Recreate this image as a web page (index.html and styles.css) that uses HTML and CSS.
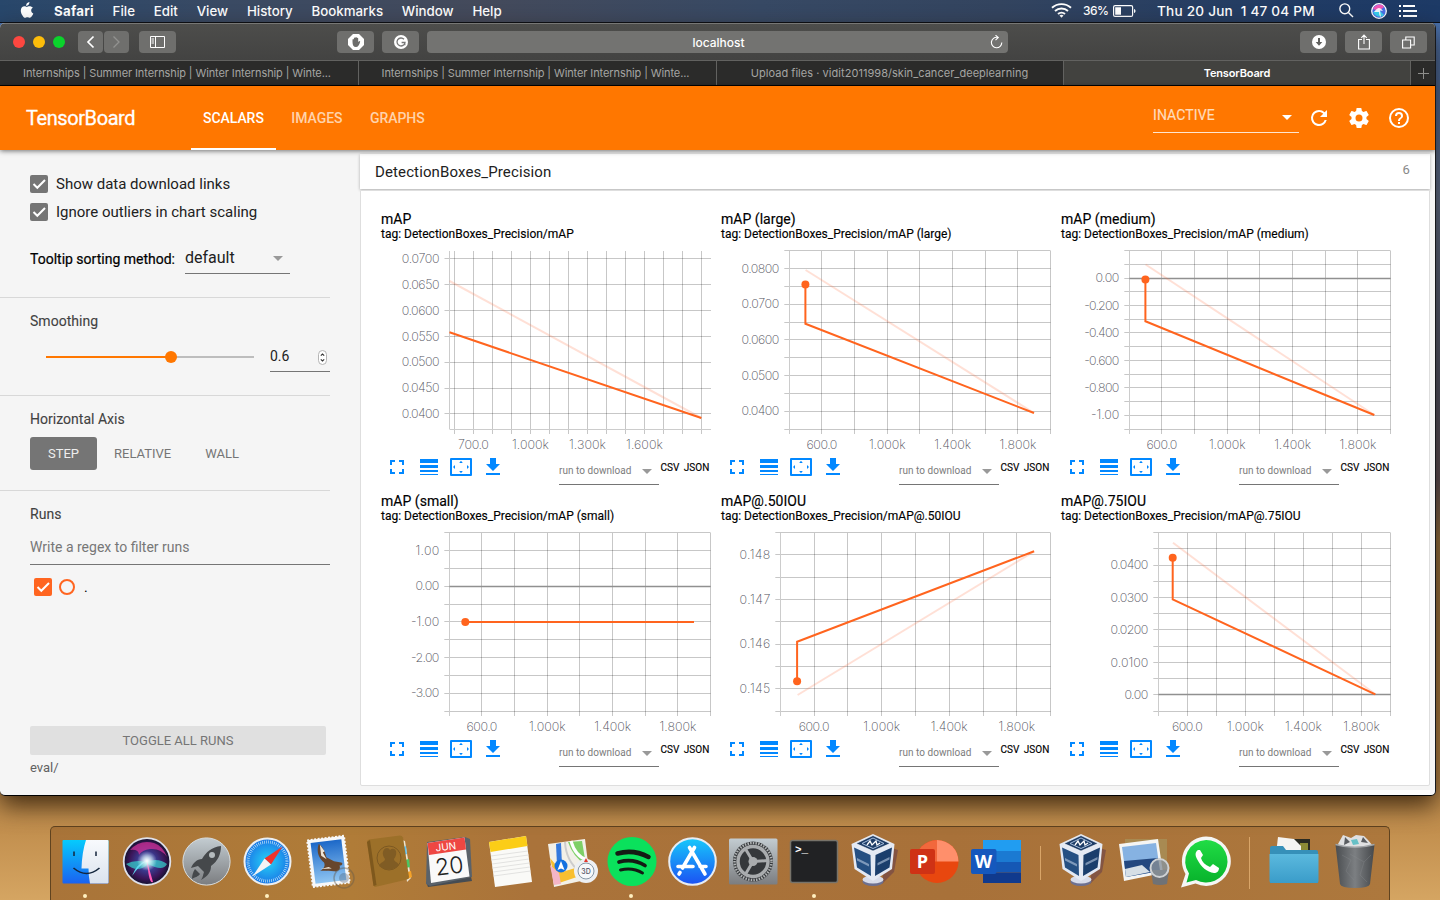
FILE: index.html
```html
<!DOCTYPE html>
<html lang="en">
<head>
<meta charset="utf-8">
<title>TensorBoard</title>
<link rel="stylesheet" href="styles.css">
</head>
<body>
<svg class="defs" width="0" height="0">
  <defs>
    <linearGradient id="gFinder" x1="0" y1="0" x2="0" y2="1"><stop offset="0" stop-color="#05cbfd"/><stop offset="1" stop-color="#1b62f0"/></linearGradient>
    <linearGradient id="gFace" x1="0" y1="0" x2="0" y2="1"><stop offset="0" stop-color="#f8fafd"/><stop offset="1" stop-color="#dbe3ee"/></linearGradient>
    <linearGradient id="gSteel" x1="0" y1="0" x2="0" y2="1"><stop offset="0" stop-color="#c3ccd1"/><stop offset="1" stop-color="#7b7d80"/></linearGradient>
    <radialGradient id="gSiri"><stop offset="0" stop-color="#6fc4ea"/><stop offset=".35" stop-color="#3b3f96"/><stop offset=".75" stop-color="#3a1558"/><stop offset="1" stop-color="#12122c"/></radialGradient>
    <radialGradient id="gGlow"><stop offset="0" stop-color="#fff"/><stop offset=".3" stop-color="#fff" stop-opacity=".7"/><stop offset="1" stop-color="#fff" stop-opacity="0"/></radialGradient>
    <radialGradient id="gSafari"><stop offset="0" stop-color="#25d3f7"/><stop offset="1" stop-color="#1b76e6"/></radialGradient>
    <linearGradient id="gStore" x1="0" y1="0" x2="0" y2="1"><stop offset="0" stop-color="#17c9fb"/><stop offset="1" stop-color="#1b50f3"/></linearGradient>
    <linearGradient id="gSky" x1="0" y1="0" x2="0" y2="1"><stop offset="0" stop-color="#1c68c8"/><stop offset="1" stop-color="#8fc5f2"/></linearGradient>
    <linearGradient id="gFolder" x1="0" y1="0" x2="0" y2="1"><stop offset="0" stop-color="#5bb9de"/><stop offset="1" stop-color="#3a9cc9"/></linearGradient>
    <linearGradient id="gBin" x1="0" y1="0" x2="1" y2="0"><stop offset="0" stop-color="#4a4d50"/><stop offset=".5" stop-color="#7c7f82"/><stop offset="1" stop-color="#45484b"/></linearGradient>
    <linearGradient id="gWa" x1="0" y1="0" x2="0" y2="1"><stop offset="0" stop-color="#20dc45"/><stop offset="1" stop-color="#08b32c"/></linearGradient>
    <symbol id="check" viewBox="0 0 18 18"><path d="M3.500 9 7.300 12.800 15 5" fill="none" stroke="#fff" stroke-width="2"/></symbol>
    <symbol id="vbox" viewBox="0 0 60 70">
      <path d="M42 16 54 20 50 42 38 54Z" fill="#4b2850" opacity=".4"/>
      <ellipse cx="29" cy="51.500" rx="10.500" ry="4.500" fill="#6d7090"/><ellipse cx="29" cy="49.500" rx="10.500" ry="4" fill="#d8dcea"/>
      <path d="M29 4 50.500 14 48 39 29 51 10.500 39 7.500 14Z" fill="#e4e9f3"/>
      <path d="M29 5.500 46 13.500 29 21 12 13.500Z" fill="#1d3c66" stroke="#fff" stroke-width=".6"/>
      <path d="M10 17.500 26.500 25 27 46 13 37.500Z" fill="#254f82"/>
      <path d="M48 17.500 31.500 25 31 46 45.500 37.500Z" fill="#1b3e6c"/>
      <path d="M29 8 40 13.500 29 18.500 18 13.500Z" fill="none" stroke="#a8bfdd" stroke-width="1"/>
      <path d="m23 15 3-4 2 4 4-4 1 4 3-2" fill="none" stroke="#fff" stroke-width="1.300"/>
      <path d="m13 28 12 6v2.500l-12-6zM45.500 27l-12 6v2.500l12-6z" fill="#b9c9df" opacity=".6"/>
    </symbol>
  </defs>
</svg>

<header class="menubar">
  <svg class="apple" width="14" height="17" viewBox="0 0 14 17"><path fill="#fff" d="M9.400 0c.1 1.100-.3 2.100-.9 2.800-.6.700-1.500 1.200-2.400 1.200-.1-1 .4-2.100.9-2.700C7.600.6 8.600.1 9.400 0ZM12.800 5.700c-1 .6-1.600 1.500-1.600 2.700 0 1.400.8 2.500 2.100 3-.3 1-.8 1.900-1.400 2.700-.6.9-1.200 1.700-2.200 1.700-.9 0-1.200-.6-2.300-.6s-1.500.6-2.300.6c-1 0-1.700-.9-2.300-1.800C1.600 12.400.8 10.400.8 8.700c0-2.900 1.800-4.400 3.600-4.400 1 0 1.800.6 2.400.6.600 0 1.500-.7 2.700-.7 1.300 0 2.500.5 3.300 1.500Z"/></svg>
  <nav class="menus"><b>Safari</b><span>File</span><span>Edit</span><span>View</span><span>History</span><span>Bookmarks</span><span>Window</span><span>Help</span></nav>
  <div class="status">
    <svg width="21" height="15" viewBox="0 0 21 15" fill="none" stroke="#fff" stroke-width="1.900"><path d="M1 4.800a14 14 0 0 1 19 0M4 8a9.500 9.500 0 0 1 13 0M7 11a5.200 5.200 0 0 1 7 0"/><path d="m10.500 14.800-2-2.200q2-1.500 4 0z" fill="#fff" stroke="none"/></svg>
    <span class="pct">36%</span>
    <svg class="battery" width="24" height="12" viewBox="0 0 24 12"><rect x=".6" y=".6" width="19" height="10.800" rx="1.500" fill="none" stroke="#fff" stroke-width="1.200"/><path d="M2.200 2.200h5.800v7.600H2.200zM21 4c2 .6 2 3.400 0 4z" fill="#fff"/></svg>
    <span class="clock">Thu 20 Jun&nbsp; 1 47 04 PM</span>
    <svg class="lens" width="15" height="15" viewBox="0 0 15 15" fill="none" stroke="#fff" stroke-width="1.400"><circle cx="5.800" cy="5.800" r="4.900"/><path d="m9.400 9.400 4.600 4.600"/></svg>
    <svg class="siri" width="16" height="16" viewBox="0 0 16 16"><circle cx="8" cy="8" r="7.300" fill="#4a6fe8" stroke="#fff" stroke-width="1.300"/><path d="M2 6C4 1 11 0 13 4L8 8z" fill="#f058b8"/><path d="m2 9 6-2 5 5c-3 3-9 2-11-3z" fill="#37cfee"/><path d="M3 9q3-4 5-4t4 3l-3-.5L10 14q-2-1-2-5-2 0-5 0z" fill="#fff" opacity=".9"/></svg>
    <svg width="19" height="12" viewBox="0 0 19 12" fill="#fff"><path d="M0 0h2v2H0zM0 5h2v2H0zM0 10h2v2H0zM4 0h12v2H4zM4 5h14v2H4zM4 10h14v2H4z"/></svg>
  </div>
</header>

<section class="window">
  <div class="toolbar">
    <div class="lights"><i class="red"></i><i class="yellow"></i><i class="green"></i></div>
    <div class="navpair">
      <span class="tbtn small"><svg width="9" height="14" viewBox="0 0 9 14"><path d="M7.500 1.500 2 7l5.500 5.500" fill="none" stroke="#fff" stroke-width="1.700"/></svg></span>
      <span class="tbtn small"><svg width="9" height="14" viewBox="0 0 9 14"><path d="M1.500 1.500 7 7l-5.500 5.500" fill="none" stroke="#929290" stroke-width="1.300"/></svg></span>
    </div>
    <span class="tbtn side"><svg width="15" height="12" viewBox="0 0 15 12" fill="none" stroke="#fff"><path d="M.5.500h14v11H.5zM5.500.500v11M1.500 3h2.500M1.500 5h2.500M1.500 7h2.500"/></svg></span>
    <span class="tbtn adb"><svg width="16" height="16" viewBox="0 0 16 16"><path d="M5 0h6l5 5v6l-5 5H5l-5-5V5z" fill="#fff"/><path d="M4.500 8V5.500q.8-.8 1.400 0V4q.8-.9 1.400 0v-.6q.8-.8 1.500 0V4q.8-.6 1.400.2V8q1.600-1.600 2-.6c-.7 3.500-2.200 5.600-4.200 5.600C5.500 13 4.500 11 4.500 8Z" fill="#6d6d6b"/></svg></span>
    <span class="tbtn"><svg width="14" height="14" viewBox="0 0 14 14"><circle cx="7" cy="7" r="7" fill="#fff"/><path d="M10 4.300A4 4 0 1 0 11 7.500H7.600M10.800 7.500v2.800" fill="none" stroke="#777" stroke-width="1.300"/></svg></span>
    <div class="address"><span>localhost</span><svg width="13" height="14" viewBox="0 0 13 14"><path d="M7.500 2.400A5.200 5.200 0 1 0 11.800 7.500M5.500.2 8.300 2.500 5.500 5.100" fill="none" stroke="#fff" stroke-width="1.100"/></svg></div>
    <div class="right">
      <span class="tbtn"><svg width="14" height="14" viewBox="0 0 14 14"><circle cx="7" cy="7" r="7" fill="#fff"/><path d="M6 3h2v4h2.300L7 10.700 3.700 7H6z" fill="#60605e"/></svg></span>
      <span class="tbtn"><svg width="12" height="16" viewBox="0 0 12 16" fill="none" stroke="#fff" stroke-width="1.100"><path d="M4 5.500H.6v9.500h10.800V5.500H8M6 10V1.200M3.300 3.800 6 1.100l2.700 2.700"/></svg></span>
      <span class="tbtn"><svg width="13" height="13" viewBox="0 0 13 13" fill="none" stroke="#fff" stroke-width="1.100"><path d="M.6 4h8v8h-8zM3.800 4V1h8.400v8H8.600"/></svg></span>
    </div>
  </div>
  <div class="tabs">
    <div class="tab tight"><span>Internships | Summer Internship | Winter Internship | Winte...</span></div>
    <div class="tab tight"><span>Internships | Summer Internship | Winter Internship | Winte...</span></div>
    <div class="tab"><span>Upload files · vidit2011998/skin_cancer_deeplearning</span></div>
    <div class="tab active"><span>TensorBoard</span></div>
    <div class="plus"><svg width="11" height="11" viewBox="0 0 11 11"><path d="M5.500 0v11M0 5.500h11" stroke="#8d8d8b"/></svg></div>
  </div>

  <div class="appbar">
    <h1>TensorBoard</h1>
    <nav><a class="on">SCALARS</a><a>IMAGES</a><a>GRAPHS</a></nav>
    <div class="reload"><span>INACTIVE</span><i></i></div>
    <svg class="ic" viewBox="0 0 24 24"><path d="M17.650 6.350A7.960 7.960 0 0 0 12 4a8 8 0 1 0 7.730 10h-2.080A6 6 0 1 1 12 6c1.660 0 3.140.69 4.220 1.780L13 11h7V4z"/></svg>
    <svg class="ic" viewBox="0 0 24 24"><path d="M19.430 12.980c.04-.32.07-.64.07-.98s-.03-.66-.07-.98l2.110-1.650c.19-.15.24-.42.12-.64l-2-3.460c-.12-.22-.39-.3-.61-.22l-2.490 1c-.52-.4-1.080-.73-1.690-.98l-.38-2.650A.488.488 0 0 0 14 2h-4c-.25 0-.46.18-.49.42l-.38 2.650c-.61.25-1.170.59-1.690.98l-2.490-1c-.23-.09-.49 0-.61.22l-2 3.460c-.13.22-.07.49.12.64l2.110 1.650c-.04.32-.07.65-.07.98s.03.66.07.98l-2.110 1.650c-.19.15-.24.42-.12.64l2 3.460c.12.22.39.3.61.22l2.490-1c.52.4 1.080.73 1.690.98l.38 2.650c.03.24.24.42.49.42h4c.25 0 .46-.18.49-.42l.38-2.650c.61-.25 1.170-.59 1.690-.98l2.490 1c.23.09.49 0 .61-.22l2-3.460c.12-.22.07-.49-.12-.64zM12 15.500a3.500 3.500 0 1 1 0-7 3.500 3.500 0 0 1 0 7z"/></svg>
    <svg class="ic" viewBox="0 0 24 24"><path d="M11 18h2v-2h-2v2zm1-16a10 10 0 1 0 0 20 10 10 0 0 0 0-20zm0 18a8 8 0 1 1 0-16 8 8 0 0 1 0 16zm0-14a4 4 0 0 0-4 4h2a2 2 0 1 1 4 0c0 2-3 1.750-3 5h2c0-2.250 3-2.500 3-5a4 4 0 0 0-4-4z"/></svg>
  </div>

  <div class="content">
    <aside>
      <div class="sec s1">
        <label class="cb"><i><svg><use href="#check"/></svg></i>Show data download links</label>
        <label class="cb"><i><svg><use href="#check"/></svg></i>Ignore outliers in chart scaling</label>
        <div class="sorting"><span>Tooltip sorting method:</span><div class="dd">default<i></i></div></div>
      </div>
      <div class="sec s2">
        <h3>Smoothing</h3>
        <div class="smooth"><div class="slider"><b></b><i></i><s></s></div><div class="num">0.6<svg width="9" height="15" viewBox="0 0 9 15"><rect x=".5" y=".5" width="8" height="14" rx="4" fill="#fff" stroke="#b5b5b5"/><path d="M2.800 5.700 4.500 4l1.700 1.700M2.800 9.300 4.500 11l1.700-1.700" fill="none" stroke="#333" stroke-width="1.100"/></svg></div></div>
      </div>
      <div class="sec s3">
        <h3>Horizontal Axis</h3>
        <div class="axis"><span class="on">STEP</span><span>RELATIVE</span><span>WALL</span></div>
      </div>
      <div class="s4">
        <h3>Runs</h3>
        <div class="regex">Write a regex to filter runs</div>
        <div class="run"><i class="box"><svg><use href="#check"/></svg></i><i class="ring"></i><span>.</span></div>
        <div class="toggle">TOGGLE ALL RUNS</div>
        <div class="eval">eval/</div>
      </div>
    </aside>
    <main>
      <div class="group"><span>DetectionBoxes_Precision</span><em>6</em></div>
      <div class="pane" id="pane"></div>
      <div class="next"></div>
    </main>
  </div>
</section>

<footer class="dock">
  <div class="app run"><svg viewBox="0 0 60 70"><rect x="7.500" y="10" width="46" height="43.500" rx="1" fill="url(#gFinder)"/><path d="M31 10h21.500q1 0 1 1v41.500q0 1-1 1H35q-1.500-7-1.500-15H26.500Q27 22 31 10Z" fill="url(#gFace)"/><path d="M19 21.500v4.500M41 21.500v4.500" stroke="#14263d" stroke-width="1.500"/><path d="M18.500 38q13 11 26 0" fill="none" stroke="#14263d" stroke-width="1.600"/></svg></div>
  <div class="app"><svg viewBox="0 0 60 70"><circle cx="31" cy="31.500" r="23.300" fill="url(#gSiri)" stroke="#dfe1ea" stroke-width="1.800"/><path d="M14 20q10-11 24-7 9 3 13 14-6-9-17-8-8 1-11 6 0-6-9-5Z" fill="#d8339c" opacity=".7"/><path d="M10 34q9-5 20-2 12-5 21 2-4 8-19 0-10 10-22 0Z" fill="#35d6cf" opacity=".7"/><path d="m31 31 6 21q-4 3-6-21Z" fill="#ff59b8"/><path d="M30 31q-9 2-14 15 7-10 14-15Z" fill="#5fd6ef"/><circle cx="31" cy="31" r="10" fill="url(#gGlow)"/></svg></div>
  <div class="app"><svg viewBox="0 0 60 70"><circle cx="30.500" cy="31.500" r="23.600" fill="url(#gSteel)" stroke="#d9dfe2"/><path d="M45 16c-9 1-15 6-19 13-5 0-9 4-11 9l7-2 4 4 2 2c-1 3-1 5-3 8 7-4 10-8 10-14 7-5 10-12 10-20ZM19 39l5 5c-2 3-5 3-8 5 0-4 1-7 3-10Z" fill="#45484b"/><circle cx="36" cy="25" r="3" fill="#b4babd"/></svg></div>
  <div class="app run"><svg viewBox="0 0 60 70"><circle cx="30.500" cy="31.500" r="23" fill="url(#gSafari)" stroke="#eceff2" stroke-width="2"/><circle cx="30.500" cy="31.500" r="19.500" fill="none" stroke="#d8f0fb" stroke-width="3" stroke-dasharray=".6 1.400"/><path d="M45.500 16.500 34 34.500 27.500 28.500Z" fill="#f0332c"/><path d="M15.500 46.500 27.500 28.500 34 34.500Z" fill="#f3f4f5"/></svg></div>
  <div class="app"><svg viewBox="0 0 60 70"><g transform="rotate(-7 30 32)"><rect x="12" y="8" width="37" height="47" fill="#f7f8f9" stroke="#f7f8f9" stroke-width="2" stroke-dasharray="2 1.500"/><rect x="15" y="11" width="31" height="41" fill="url(#gSky)"/><path d="M23 13c4 3 5 8 6 14l7 5 7 2c2 1 1 3-2 3 1 4-2 6-6 5-6-1-10-2-14-2 4-2 6-4 5-8-4-4-7-11-3-19Z" fill="#67462d"/><path d="m24 14 4 7-2 1 3 7-5-4zM22 38l8-1 3 2z" fill="#eee6d8"/></g><circle cx="46" cy="48" r="10" fill="none" stroke="#655b4c" stroke-width="1.500" opacity=".45"/><circle cx="46" cy="48" r="5" fill="#4a5c72" opacity=".35"/></svg></div>
  <div class="app"><svg viewBox="0 0 60 70"><path d="m43 10 3 1 6 37-4 4z" fill="#eee6d3"/><path d="m44 17 3-1 1 8-3 1z" fill="#66c3ef"/><path d="m46 30 4-1 1 8-4 1z" fill="#4cc663"/><path d="m48 42 4-1 1 6-4 2z" fill="#f6a328"/><path d="M8 12q0-2 2-2.500l31-4q2 0 3 2L50 47q0 2-2 2.500L16 57q-1 0-1.500-2Z" fill="#9c7029"/><path d="M8 12 14.500 56l3-1L11 10Z" fill="#7e581d"/><circle cx="30" cy="28" r="12" fill="none" stroke="#7d5922"/><path d="M20 36c1-4 6-4 6-7-4-5-2-11 2-11q2 0 3 2 2-2 4-1c3 1 3 6 0 10 0 3 4 3 5 6-5 6-14 6-20 1Z" fill="#805c24"/></svg></div>
  <div class="app"><svg viewBox="0 0 60 70"><path d="m7 52 2 5 44-6-1-4z" fill="#454c53"/><path d="M8 12 46 7l5 2 2 38-42 9-4-2Z" fill="#5a626a"/><path d="m8.500 13 37-5.500 5 39L12 53Z" fill="#f9f9f9"/><path d="m8.500 13 37-5.500 1.500 12L10 25Z" fill="#ee4742"/><g transform="rotate(-7 30 30)" text-anchor="middle"><text class="cal-m" x="28.500" y="20">JUN</text><text class="cal-d" x="29.500" y="44">20</text></g></svg></div>
  <div class="app"><svg viewBox="0 0 60 70"><path d="m9 12 37-6 6 46-37 5Z" fill="#fafaf7"/><path d="m9 12 37-6 1.500 10-37 6Z" fill="#fbcd17"/><path d="m11 26 37-5m-36.500 9 37-5m-36.500 9 37-5m-36.500 9 37-5m-36.500 9 37-5m-36.500 9 37-5" stroke="#e2e2e0"/></svg></div>
  <div class="app"><svg viewBox="0 0 60 70"><path d="m7 14 37-5 5 40-36 8Z" fill="#f2f0e8"/><path d="m9 28 12 14 20-6 1 9-27 9Z" fill="#f8bf30"/><path d="m27 12 14-1 4 24q-13-8-18-23Z" fill="#7ed067"/><path d="M30 11q4 15 16 19" fill="none" stroke="#fff" stroke-width="3"/><path d="m9 35 9 8 2 11-7 1Z" fill="#f5b5c6"/><path d="m15 14 5-1 1 22h-5Z" fill="#3479dd"/><path d="M24 12q1 19 15 30" fill="none" stroke="#ccc" stroke-width="2"/><circle cx="20" cy="36" r="6.500" fill="#1471e0"/><path d="m20 31 3.500 9-3.500-1.500-3.500 1.500z" fill="#fff"/><circle cx="45" cy="41" r="12" fill="#edf0f3"/><circle cx="45" cy="41" r="8" fill="#f6f8fa" stroke="#8797a6"/><path d="m45 28 2 4h-4z" fill="#e2382e"/><text class="threed" x="45" y="44" text-anchor="middle">3D</text></svg></div>
  <div class="app run"><svg viewBox="0 0 60 70"><circle cx="31" cy="31.500" r="24.500" fill="#0ae15c"/><g fill="none" stroke="#141b14" stroke-linecap="round"><path d="M16.500 23.500q16-4.500 31 3.500" stroke-width="4.500"/><path d="M18 32q14-4 26 3.500" stroke-width="3.700"/><path d="M19.500 40q12-3 22 3" stroke-width="3"/></g></svg></div>
  <div class="app"><svg viewBox="0 0 60 70"><circle cx="30.500" cy="31.500" r="23.300" fill="url(#gStore)" stroke="#e7ecf3" stroke-width="2"/><g stroke="#fff" stroke-width="3.600" stroke-linecap="round"><path d="m32.500 17.500-12 20.500M27.500 17.500 43 44M16 36.500h15M38 36.500h6M18 42.500l-1 1.500"/></g></svg></div>
  <div class="app"><svg viewBox="0 0 60 70"><rect x="6" y="8.500" width="48.500" height="46" rx="1.500" fill="url(#gSteel)"/><circle cx="30" cy="31.500" r="20" fill="#35383b"/><circle cx="30" cy="31.500" r="18.500" fill="none" stroke="#b1b4b5" stroke-width="2.500" stroke-dasharray="1.500 1.200"/><circle cx="30" cy="31.500" r="15" fill="none" stroke="#a9acae" stroke-width="3.500"/><circle cx="30" cy="31.500" r="4.500" fill="#a9acae"/><path d="m30 31.500 15-1M30 31.500 22.500 19M30 31.500 22 45" stroke="#a9acae" stroke-width="3"/></svg></div>
  <div class="app run"><svg viewBox="0 0 60 70"><rect x="6.500" y="10.500" width="47" height="42" rx="2" fill="#212224" stroke="#77736a" stroke-width="1.500"/><text class="term" x="11" y="23">&gt;_</text></svg></div>
  <div class="app"><svg viewBox="0 0 60 70"><use href="#vbox"/></svg></div>
  <div class="app"><svg viewBox="0 0 60 70"><circle cx="32" cy="31.500" r="21.500" fill="#e8470f"/><path d="M32 10a21.500 21.500 0 0 1 21.500 21.500H32Z" fill="#ff8f6b"/><path d="M32 10v21.500H10.500A21.500 21.500 0 0 1 32 10Z" fill="#f2683c"/><rect x="5" y="19" width="25" height="25" rx="2" fill="#cf3215"/><text class="office" x="17.500" y="38" text-anchor="middle">P</text></svg></div>
  <div class="app"><svg viewBox="0 0 60 70"><path d="M17 10h38v11H17z" fill="#219df1"/><path d="M17 21h38v11H17z" fill="#1b7ad2"/><path d="M17 32h38v10.500H17z" fill="#1558b5"/><path d="M17 42.500h38V53H17z" fill="#103a8d"/><rect x="5" y="19" width="25.500" height="25" rx="2" fill="#1558bd"/><text class="office" x="17.500" y="38" text-anchor="middle">W</text></svg></div>
  <div class="sep short"></div>
  <div class="app wide"><svg viewBox="0 0 60 70"><use href="#vbox" x="1"/></svg></div>
  <div class="app wide"><svg viewBox="0 0 60 70"><path d="M12 9h42v30H12z" fill="#a88a52"/><path d="m6 14 39-5 5 34-39 8Z" fill="#f5f5f3"/><path d="m9 17 34-4 4 28-34 6Z" fill="#86b2e2"/><path d="m11 31 34-3 2 13-34 6Z" fill="#24487f"/><path d="m12 39 17-4 8 7-24 5Z" fill="#d6dfe6"/><path d="M38 40h18l-2 14q-7 2-14 0Z" fill="#6f7276"/><circle cx="46.500" cy="38" r="9" fill="#88919a" fill-opacity=".8" stroke="#cfd2d4" stroke-width="2"/></svg></div>
  <div class="app wide"><svg viewBox="0 0 60 70"><path d="M30 6.500A24.700 24.700 0 1 1 19.500 53.500L5 57.500 9.500 44A24.700 24.700 0 0 1 30 6.500Z" fill="#f5f6f5"/><path d="M30 10A21.300 21.300 0 1 1 20 50L10.500 52.500 13 43.500A21.300 21.300 0 0 1 30 10Z" fill="url(#gWa)"/><path d="M22 20c-3 2-3 5-1 9 4 8 10 13 17 14 3 0 5-2 5-5l-6-4-3 3c-5-2-8-5-9-9l2-3-3-5Z" fill="#fff"/></svg></div>
  <div class="sep"></div>
  <div class="app"><svg viewBox="0 0 60 70"><path d="M15 9h30v15H15z" fill="#2a2b22"/><path d="M35 13h8v8h-8z" fill="#8c8b35"/><path d="m13 7 16 2 7 7v8H11Z" fill="#f4f4f2"/><path d="M5 18q0-2 2-2h11l3 4h30q2 0 2 2v31H5Z" fill="#3690b9"/><path d="M4.500 24h49V51q0 2-2 2h-45q-2 0-2-2Z" fill="url(#gFolder)"/></svg></div>
  <div class="app"><svg viewBox="0 0 60 70"><path d="m12 14 5-9 8 3 5-3 8 1 4 4 5 6-5 4H15Z" fill="#dfe0e1"/><path d="m19 7 5 5-6 3zM37 7l5 6-7-1z" fill="#595c60"/><path d="m25 10 6-1 2 5-6 1z" fill="#66c0c6"/><path d="M9.500 14.500q19.500 5.500 39 0L44 54q-1 4-15 4t-15-4Z" fill="url(#gBin)"/><path d="M9.500 14.500q19.500 5.500 39 0" fill="none" stroke="#a1a4a7" stroke-width="1.500"/><path d="m16 25 9 5-5 11 8 9m-4-26 14 8 7-7M38 32l-4 13 7 7" fill="none" stroke="#8b8e91" opacity=".3"/></svg></div>
</footer>
<script src="charts.js"></script>
</body>
</html>
```
FILE: styles.css
```css
* { box-sizing: border-box; }
body {
  margin: 0; width: 1440px; height: 900px; overflow: hidden;
  display: flex; flex-direction: column;
  font-family: Roboto, "Liberation Sans", sans-serif; color: #000;
  background:
    linear-gradient(180deg, #4874b5 0, #47699c 90px, #5b6e8e 200px, #4c5268 390px, #5a4e57 480px, #94703f 540px, #a87c43 700px, #c28f4e 830px, #d5a562 900px);
}
.defs { position: absolute; }
i, em { font-style: normal; }
h1, h3 { margin: 0; font-weight: 400; }

/* menu bar */
.menubar {
  flex: none; height: 23px; display: flex; align-items: center; padding: 0 22px 1px 20px;
  background: linear-gradient(90deg, #28476b 0, #3a4a63 230px, #444a5b 480px, #374964 760px, #33445f 1000px, #203b64 1300px, #1d3a66 100%);
  border-bottom: 1px solid #0b0f16; color: #fff;
  font-family: Inter, sans-serif; font-size: 13.3px; font-weight: 500;
}
.apple { margin-top: -1px; }
.menus { display: flex; gap: 18.8px; margin-left: 20px; }
.menus b { font-weight: 700; letter-spacing: .25px; }
.status { margin-left: auto; display: flex; align-items: center; }
.pct { font-size: 12px; margin-left: 11px; width: 30px; letter-spacing: -.5px; }
.clock { margin-left: 20px; width: 160px; white-space: nowrap; font-size: 13.6px; letter-spacing: .22px; }
.lens { margin-left: 22px; }
.siri { margin: 0 12px 0 17px; }

/* browser window */
.window {
  flex: none; width: 1436px; height: 773px; overflow: hidden; display: flex; flex-direction: column;
  border-right: 1px solid #16181c; border-bottom: 1px solid #000; border-radius: 5px;
  background: #f5f5f5; box-shadow: 0 10px 24px rgba(30, 15, 0, .75);
  position: relative; z-index: 1;
}
.toolbar {
  flex: none; height: 38px; display: flex; align-items: center; padding: 0 8px 0 13px;
  background: linear-gradient(#4d4d4b, #434342); border-top: 1px solid #777775; border-bottom: 1px solid #626260;
}
.lights { display: flex; gap: 8px; }
.lights i { width: 12px; height: 12px; border-radius: 50%; }
.red { background: #fd4740; } .yellow { background: #fdbd0a; } .green { background: #0bd32c; }
.tbtn {
  width: 37px; height: 22px; border-radius: 4px; background: #6f6f6d;
  display: flex; align-items: center; justify-content: center;
}
.tbtn.small { width: 25px; }
.navpair { display: flex; gap: 1px; margin-left: 13px; }
.side { margin-left: 10px; }
.adb { margin: 0 8px 0 161px; }
.address {
  width: 581px; height: 22px; margin-left: 8px; border-radius: 4px; background: #737371; color: #fff;
  display: flex; align-items: center; padding-right: 5px; font: 500 12px Inter, sans-serif;
}
.address span { flex: 1; text-align: center; padding-left: 20px; }
.right { display: flex; gap: 8px; margin-left: auto; }
.tabs {
  flex: none; height: 25px; display: grid; grid-template-columns: 359px 358px 347px 347px 1fr;
  background: #2b2b2a; border-bottom: 1px solid #000; color: #a5a5a3; font: 11px/24px Inter, sans-serif;
}
.tab { border-right: 1px solid #626260; text-align: center; white-space: nowrap; padding-right: 1px; letter-spacing: .04px; }
.tab.tight { padding-right: 4px; letter-spacing: -.1px; }
.tab.active { background: #42423f; color: #fff; font-weight: 600; padding: 0; letter-spacing: -.15px; }
.plus { display: flex; align-items: center; justify-content: center; }

/* app bar */
.appbar {
  flex: none; height: 64px; display: flex; align-items: center; padding: 0 24px 0 26px;
  background: #ff7700; color: #fff; position: relative; z-index: 2; box-shadow: 0 1px 5px rgba(0, 0, 0, .55);
}
.appbar h1 { font-size: 20px; width: 165px; -webkit-text-stroke: .3px #fff; letter-spacing: -.42px; }
.appbar nav { display: flex; gap: 3.500px; align-self: stretch; }
.appbar nav a { padding: 0 12px; line-height: 64px; font-size: 14px; font-weight: 500; letter-spacing: -.05px; color: #ffd3ab; }
.appbar nav a.on { color: #fff; border-bottom: 2px solid #fff; }
.reload {
  margin: 0 8px 0 auto; width: 146px; height: 35px; border-bottom: 1px solid #ffe6d0; color: #ffdcbc;
  font-size: 14px; display: flex; justify-content: space-between; padding: 9px 7px 0 0; margin-top: -6px;
  letter-spacing: .1px; -webkit-text-stroke: .2px #ffdcbc;
}
.reload i, .dd i, .dl i { width: 0; height: 0; border: 5px solid transparent; border-top-color: #fff; border-bottom: 0; margin-top: 8px; }
.ic { width: 24px; height: 24px; fill: #fff; margin-left: 16px; }
.reload + .ic { margin-left: 0; }

/* sidebar */
.content { flex: 1; display: flex; min-height: 0; }
aside { width: 360px; color: #424242; font-size: 14px; }
.sec { width: 330px; border-bottom: 1px solid #d8d8d8; padding-left: 30px; }
.s1 { height: 148px; padding-top: 20px; }
.cb { display: flex; align-items: center; height: 28px; font-size: 15px; color: #212121; }
.cb i, .box { width: 18px; height: 18px; border-radius: 2px; background: #757575; margin-right: 8px; display: flex; }
.cb svg, .box svg { width: 18px; height: 18px; }
.sorting { display: flex; align-items: center; margin-top: 16px; height: 32px; color: #000; font-size: 14px; }
.sorting span { width: 155px; padding-top: 2px; -webkit-text-stroke: .2px #000; white-space: nowrap; }
.dd { width: 105px; height: 32px; border-bottom: 1px solid #757575; font-size: 16px; line-height: 32px; color: #212121; display: flex; justify-content: space-between; padding-right: 7px; }
.dd i { border-top-color: #999; margin-top: 14px; }
.s2 { height: 98px; }
aside h3 { font-size: 14px; line-height: 20px; padding-top: 13px; letter-spacing: .02px; -webkit-text-stroke: .1px #424242; }
.smooth { display: flex; margin-top: 10px; }
.slider { width: 208px; margin: 7px 16px 0; height: 18px; position: relative; display: flex; align-items: center; }
.slider b { width: 125px; height: 2px; background: #ff7700; }
.slider s { flex: 1; height: 2px; background: #bdbdbd; }
.slider i { width: 12px; height: 12px; margin: 0 -6px; border-radius: 50%; background: #ff7700; z-index: 1; }
.num { width: 60px; height: 31px; border-bottom: 1px solid #757575; color: #212121; display: flex; align-items: center; justify-content: space-between; padding-right: 3px; }
.num svg { margin-top: 2px; }
.s3 { height: 95px; }
.axis { display: flex; margin-top: 8px; font-size: 13px; color: #757575; }
.axis span { height: 33px; line-height: 33px; padding: 0 17px; }
.axis .on { background: #757575; color: #eee; border-radius: 3px; width: 67px; text-align: center; }
.s4 { padding-left: 30px; }
.regex { width: 300px; height: 41px; border-bottom: 1px solid #757575; line-height: 46px; color: #777; }
.run .box { background: #ff6520; margin-right: 7px; }
aside .run { display: flex; align-items: center; padding-left: 4px; margin-top: 13px; color: #000; }
.ring { width: 16px; height: 16px; border: 2px solid #ff6520; border-radius: 50%; margin-right: 9px; }
.toggle { width: 296px; height: 29px; line-height: 29px; margin-top: 130px; background: #e0e0e0; border-radius: 2px; text-align: center; color: #757575; font-size: 13px; }
.eval { line-height: 25px; font-size: 13px; color: #616161; }

/* charts */
main { width: 1070px; display: flex; flex-direction: column; }
.group { flex: none; height: 35px; margin-top: 4px; background: #fff; box-shadow: 0 1px 3px rgba(0, 0, 0, .3); display: flex; justify-content: space-between; padding: 0 20px 0 15px; line-height: 36px; font-size: 15px; color: #212121; letter-spacing: .12px; }
.group em { font-size: 13px; line-height: 32px; color: #888; }
.pane { flex: none; height: 596px; margin-top: 1px; background: #fff; border: 1px solid #dedede; border-radius: 0 0 2px 2px; display: grid; grid-template-columns: repeat(3, 340px); grid-auto-rows: 282px; padding: 20px 0 0 20px; }
.next { flex: 1; margin-top: 4px; background: #fdfdfd; }
.card { display: flex; flex-direction: column; }
.card h4 { margin: 0; font-weight: 400; font-size: 14px; line-height: 17px; letter-spacing: .03px; -webkit-text-stroke: .15px #000; }
.card p { margin: 0; font-size: 12px; line-height: 13px; -webkit-text-stroke: .15px #000; }
.plot { display: block; width: 340px; height: 210px; margin-top: 4px; }
.plot text { font: 200 12.500px Inter, sans-serif; fill: #50505a; }
.tools { display: flex; align-items: flex-start; padding-left: 4px; }
.tools > svg { width: 24px; height: 24px; margin-right: 8px; fill: #0288ff; }
.dl { width: 100px; height: 30px; border-bottom: 1px solid #757575; margin-left: 46px; display: flex; justify-content: space-between; padding-right: 7px; font-size: 10px; line-height: 32px; color: #7c7c7c; letter-spacing: .04px; }
.dl i { border-top-color: #999; margin-top: 14px; }
.fmt { font-size: 10px; line-height: 25px; margin-left: 1.500px; word-spacing: 2px; -webkit-text-stroke: .15px #000; white-space: nowrap; }

/* dock */
.dock {
  flex: none; width: 1340px; height: 74px; margin: 30px 0 0 50px; padding: 3px 0 0 4px; display: flex;
  background: linear-gradient(90deg, #a97439, #b07c38 300px, #aa733a 480px, #a87139 900px, #ad783d); border: 1px solid #60431f; border-bottom: 0; border-radius: 5px 5px 0 0;
}
.app { width: 60.730px; height: 70px; position: relative; flex: none; }
.app.wide { width: 62.600px; }
.app svg { display: block; width: 60px; height: 70px; }
.app.run::after { content: ""; position: absolute; left: 28px; top: 64px; width: 4px; height: 4px; border-radius: 50%; background: #fff0c0; }
.sep { width: 27px; height: 52px; margin-top: 7px; background: linear-gradient(#d9a568, #d9a568) 11px 0 / 1px 100% no-repeat; flex: none; }
.sep.short { width: 24px; height: 34px; margin-top: 16px; background-position-x: 13px; }
.cal-m { font: 400 10px Inter, sans-serif; fill: #fff; }
.cal-d { font: 300 23px Inter, sans-serif; fill: #222; }
.threed { font: 500 7px Inter, sans-serif; fill: #556; }
.term { font: 700 11px "Liberation Mono", monospace; fill: #fff; }
.office { font: 700 18px "Open Sans", sans-serif; fill: #fff; }
```
FILE: charts.js
```js
// Plot geometry is in pixels inside a 340x210 drawing; rows run from TOP to BOTTOM.
const TOP = 5.7, BOTTOM = 184;
const wide = ["600.0", "1.000k", "1.400k", "1.800k"];
const charts = [
  { name: "mAP", x0: 68.5, right: 330, cols: Array.from({ length: 14 }, (_, i) => 73.5 + i * 19), labelCols: [1, 4, 7, 10],
    xl: ["700.0", "1.000k", "1.300k", "1.600k"], rows: [13.7, 39.5, 65.4, 91.3, 117.1, 143, 168.9],
    yl: ["0.0700", "0.0650", "0.0600", "0.0550", "0.0500", "0.0450", "0.0400"], first: 0, every: 1, open: true,
    raw: [[68.5, 36], [320.3, 173]], line: [[68.5, 87.3], [320.3, 173]] },
  { name: "mAP (large)", x0: 68.3, n: 10, yl: ["0.0800", "0.0700", "0.0600", "0.0500", "0.0400"], first: 1, every: 2,
    raw: [[84.6, 25], [313, 168]], line: [[84.4, 39.4], [84.4, 78.7], [313, 168]] },
  { name: "mAP (medium)", x0: 68.3, n: 13, yl: ["0.00", "-0.200", "-0.400", "-0.600", "-0.800", "-1.00"], first: 2, every: 2, zero: 2,
    raw: [[84.6, 19.5], [313.3, 170]], line: [[84.4, 34.5], [84.4, 76.3], [313.3, 170]] },
  { name: "mAP (small)", x0: 68.3, n: 10, yl: ["1.00", "0.00", "-1.00", "-2.00", "-3.00"], first: 1, every: 2, zero: 3,
    raw: [], line: [[84.3, 95], [313, 95]] },
  { name: "mAP@.50IOU", x0: 59.3, n: 8, yl: ["0.148", "0.147", "0.146", "0.145"], first: 1, every: 2,
    raw: [[76.6, 168], [313.1, 24.3]], line: [[76.1, 154.3], [76.1, 114.7], [313.1, 24.3]] },
  { name: "mAP@.75IOU", x0: 97.3, n: 11, yl: ["0.0400", "0.0300", "0.0200", "0.0100", "0.00"], first: 2, every: 2, zero: 10,
    raw: [[112, 15.7], [314.3, 167.3]], line: [[111.7, 30.7], [111.7, 72.3], [314.3, 167.3]] }
];

function seg(x1, y1, x2, y2, color, w = 1) {
  return `<path d="M${x1} ${y1}L${x2} ${y2}" stroke="${color}" stroke-width="${w}"/>`;
}

function label(x, y, text, anchor) {
  const w = [...text].reduce((s, c) => s + (c === "." ? 3.2 : c === "-" ? 4.3 : c === "k" ? 6 : 6.9), 0);
  return `<text x="${x}" y="${y}" text-anchor="${anchor}" textLength="${w.toFixed(1)}">${text}</text>`;
}

function plot(c) {
  const right = c.right || 329.6;
  const cols = c.cols || Array.from({ length: 8 }, (_, i) => c.x0 + (i + 1) * (right - c.x0) / 8);
  const rows = c.rows || Array.from({ length: c.n + 1 }, (_, i) => TOP + i * (BOTTOM - TOP) / c.n);
  const labelCols = c.labelCols || [0, 2, 4, 6];
  const x = v => Math.floor(v) + .5;
  let s = "";
  cols.forEach(v => s += seg(x(v), 6, x(v), 189, "rgba(0,0,0,.22)"));
  rows.forEach(v => s += seg(c.x0 - 5, x(v), right, x(v), "rgba(0,0,0,.22)"));
  s += seg(x(c.x0), 6, x(c.x0), c.open ? 184 : 189, "#ccc");
  if (c.open) s += seg(c.x0, 184.5, right, 184.5, "#ccc");
  if (c.zero) s += seg(c.x0, x(rows[c.zero]), right, x(rows[c.zero]), "#909090", 1.5);
  c.yl.forEach((t, i) => s += label(c.x0 - 10, rows[c.first + i * c.every] + 4.2, t, "end"));
  (c.xl || wide).forEach((t, i) => s += label(cols[labelCols[i]], 204, t, "middle"));
  if (c.raw.length) s += `<polyline points="${c.raw}" fill="none" stroke="#ff7043" stroke-opacity=".22" stroke-width="2"/>`;
  s += `<polyline points="${c.line}" fill="none" stroke="#ff641e" stroke-width="2"/>`;
  if (!c.open) s += `<circle cx="${c.line[0][0]}" cy="${c.line[0][1]}" r="4" fill="#ff641e"/>`;
  return `<svg class="plot" viewBox="0 0 340 210">${s}</svg>`;
}

const tools = `<div class="tools">
  <svg viewBox="0 0 24 24"><path d="M7 14H5v5h5v-2H7v-3zm-2-4h2V7h3V5H5v5zm12 7h-3v2h5v-5h-2v3zM14 5v2h3v3h2V5h-5z"/></svg>
  <svg viewBox="0 0 24 24"><path d="M3 4h18v4H3zM3 10h18v3H3zM3 15h18v2H3zM3 19h18v1H3z"/></svg>
  <svg viewBox="0 0 24 24"><path d="M2 3h20q1 0 1 1v16q0 1-1 1H2q-1 0-1-1V4q0-1 1-1zm1 2v14h18V5zM12 5.800l1.800 2.200h-3.600zM12 18.200 10.200 16h3.600zM4 12l2-1.900v3.800zM20 12l-2 1.900v-3.800z" fill-rule="evenodd"/></svg>
  <svg viewBox="0 0 24 24"><path d="M19 9h-4V3H9v6H5l7 7 7-7zM5 18v2h14v-2H5z"/></svg>
  <div class="dl">run to download<i></i></div><div class="fmt">CSV JSON</div></div>`;

document.getElementById("pane").innerHTML = charts.map(c =>
  `<div class="card"><h4>${c.name}</h4><p>tag: DetectionBoxes_Precision/${c.name}</p>${plot(c)}${tools}</div>`).join("");
```
